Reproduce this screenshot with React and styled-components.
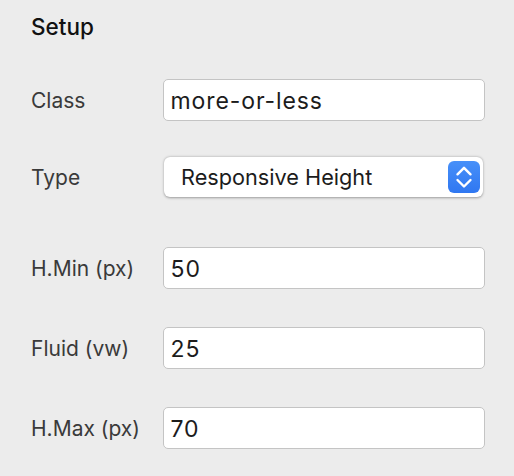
import React from 'react'
import styled, { createGlobalStyle } from 'styled-components'

const GlobalStyle = createGlobalStyle`
    html, body {
        margin: 0;
        padding: 0;
        background: #ececec;
    }
    * {
        box-sizing: border-box;
    }
`

const Panel = styled.div`
    width: 514px;
    height: 476px;
    padding: 15px 0 0 31px;
    background: #ececec;
    font-family: Inter, "Liberation Sans", sans-serif;
    overflow: hidden;
`

const Title = styled.div`
    font-size: 22.5px;
    line-height: 24px;
    font-weight: 500;
    color: #111;
`

const Row = styled.div`
    display: flex;
    align-items: center;
    margin-top: ${p => p.$gap}px;
`

const Label = styled.div`
    width: 132px;
    flex: none;
    font-size: 21px;
    color: #3a3a3a;
`

const Input = styled.input`
    width: 322px;
    height: 42px;
    padding: 2px 0 0 6.5px;
    border: 1.5px solid #c4c4c4;
    border-radius: 5px;
    background: #fff;
    font-family: inherit;
    font-size: 23px;
    letter-spacing: 0.9px;
    color: #1c1c1c;
    outline: none;
`

const Select = styled.div`
    width: 319px;
    height: 40px;
    margin-left: 1px;
    padding: 0 3px 0 17px;
    display: flex;
    align-items: center;
    justify-content: space-between;
    background: #fff;
    border-radius: 6px;
    box-shadow: 0 0.5px 2.5px rgba(0, 0, 0, 0.35);
    font-size: 21.7px;
    color: #1c1c1c;
`

const Stepper = styled.div`
    width: 32px;
    height: 32px;
    border-radius: 6px;
    background: linear-gradient(#4790f9, #2f77f1);
    display: flex;
    align-items: center;
    justify-content: center;
`

const UpDown = () => (
    <svg width="32" height="32" viewBox="0 0 32 32" fill="none" stroke="#fff" strokeWidth="2.4" strokeLinecap="round" strokeLinejoin="round">
        <path d="M9.5 13.3 L16 6.8 L22.5 13.3" />
        <path d="M9.5 19 L16 25.5 L22.5 19" />
    </svg>
)

const fields = [
    { label: 'H.Min (px)', value: '50', gap: 50 },
    { label: 'Fluid (vw)', value: '25', gap: 38 },
    { label: 'H.Max (px)', value: '70', gap: 38 },
]

const App = () => {
    return (
        <Panel>
            <GlobalStyle />
            <Title>Setup</Title>
            <Row $gap={40}>
                <Label>Class</Label>
                <Input defaultValue="more-or-less" />
            </Row>
            <Row $gap={36}>
                <Label>Type</Label>
                <Select>
                    <span>Responsive Height</span>
                    <Stepper>
                        <UpDown />
                    </Stepper>
                </Select>
            </Row>
            {fields.map(f => (
                <Row key={f.label} $gap={f.gap}>
                    <Label>{f.label}</Label>
                    <Input defaultValue={f.value} />
                </Row>
            ))}
        </Panel>
    )
}

export default App
